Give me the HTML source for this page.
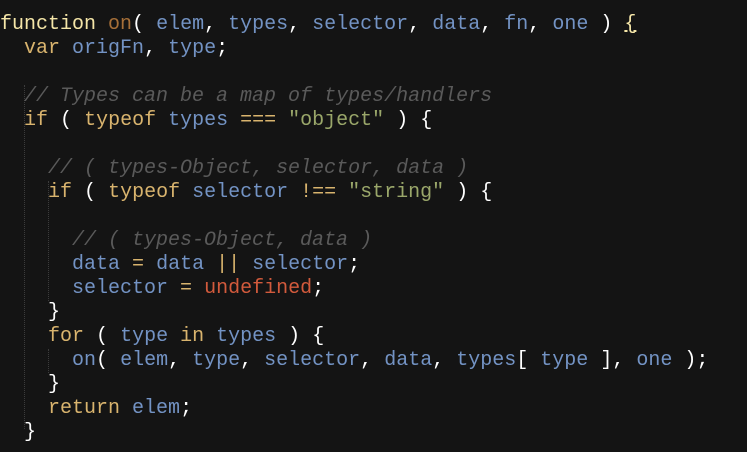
<!DOCTYPE html>
<html><head><style>
body{margin:0;background:#141414;width:747px;height:452px;overflow:hidden;}
pre{margin:0;position:absolute;left:0;top:13px;font-family:"Liberation Mono",monospace;font-size:20px;line-height:24px;color:#e8e8e8;}
.k{color:#d9b46e}.f{color:#f5e6a8}.n{color:#a66f38}.v{color:#7393c4}.c{color:#5a5a5a;font-style:italic}.s{color:#9aa76a}.u{color:#d25a3c}.p{color:#fff}
.g{position:absolute;width:0;border-left:1px dotted #3c3c3c;}
</style></head><body>
<div class="g" style="left:24px;top:85px;height:344px"></div>
<div class="g" style="left:48px;top:181px;height:120px"></div>
<div class="g" style="left:48px;top:349px;height:24px"></div>
<pre><span class="f">function</span> <span class="n">on</span><span class="p">(</span> <span class="v">elem</span><span class="p">,</span> <span class="v">types</span><span class="p">,</span> <span class="v">selector</span><span class="p">,</span> <span class="v">data</span><span class="p">,</span> <span class="v">fn</span><span class="p">,</span> <span class="v">one</span> <span class="p">)</span> <span class="f" style="text-decoration:underline">{</span>
  <span class="k">var</span> <span class="v">origFn</span><span class="p">,</span> <span class="v">type</span><span class="p">;</span>

  <span class="c">// Types can be a map of types/handlers</span>
  <span class="k">if</span> <span class="p">(</span> <span class="k">typeof</span> <span class="v">types</span> <span class="k">===</span> <span class="s">"object"</span> <span class="p">)</span> <span class="p">{</span>

    <span class="c">// ( types-Object, selector, data )</span>
    <span class="k">if</span> <span class="p">(</span> <span class="k">typeof</span> <span class="v">selector</span> <span class="k">!==</span> <span class="s">"string"</span> <span class="p">)</span> <span class="p">{</span>

      <span class="c">// ( types-Object, data )</span>
      <span class="v">data</span> <span class="k">=</span> <span class="v">data</span> <span class="k">||</span> <span class="v">selector</span><span class="p">;</span>
      <span class="v">selector</span> <span class="k">=</span> <span class="u">undefined</span><span class="p">;</span>
    <span class="p">}</span>
    <span class="k">for</span> <span class="p">(</span> <span class="v">type</span> <span class="k">in</span> <span class="v">types</span> <span class="p">)</span> <span class="p">{</span>
      <span class="v">on</span><span class="p">(</span> <span class="v">elem</span><span class="p">,</span> <span class="v">type</span><span class="p">,</span> <span class="v">selector</span><span class="p">,</span> <span class="v">data</span><span class="p">,</span> <span class="v">types</span><span class="p">[</span> <span class="v">type</span> <span class="p">],</span> <span class="v">one</span> <span class="p">);</span>
    <span class="p">}</span>
    <span class="k">return</span> <span class="v">elem</span><span class="p">;</span>
  <span class="p">}</span></pre>
</body></html>
